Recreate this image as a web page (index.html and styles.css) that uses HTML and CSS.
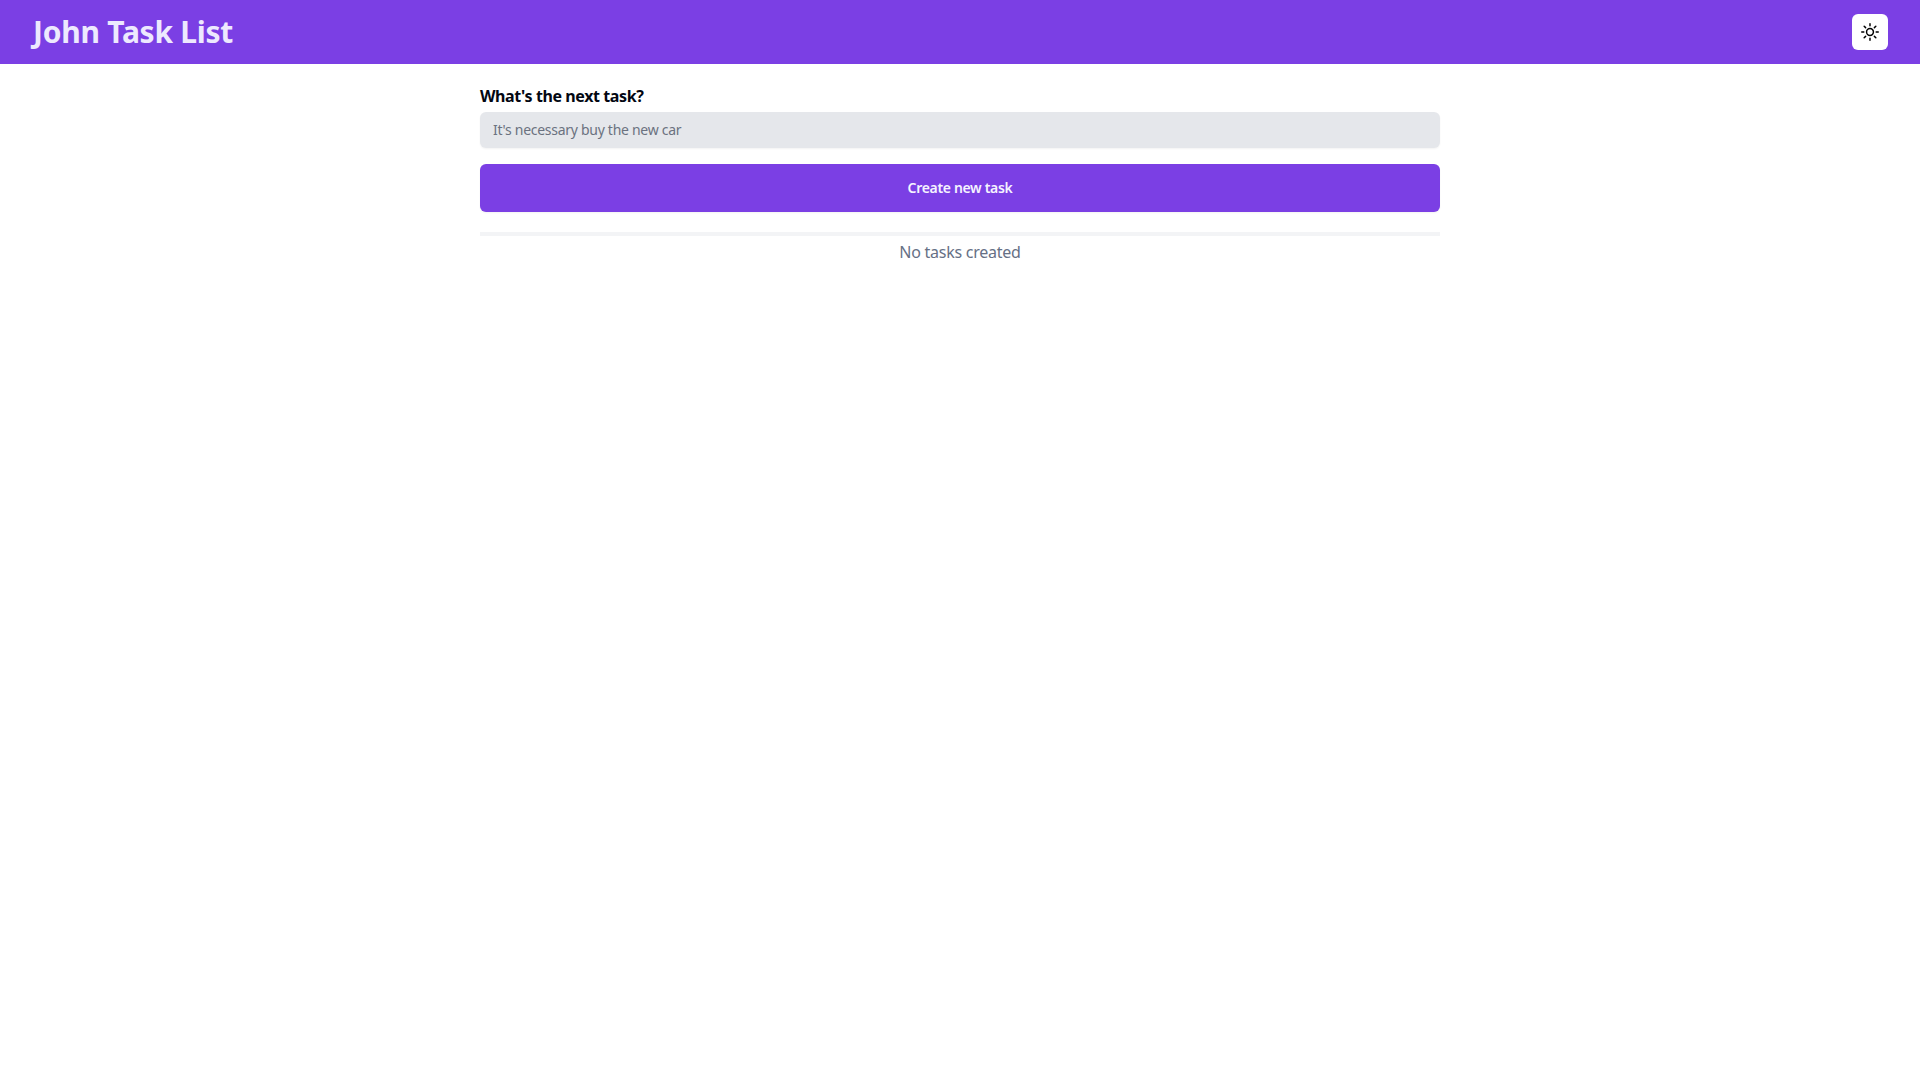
FILE: index.html
```html
<!DOCTYPE html>
<html lang="en">
<head>
<meta charset="utf-8">
<title>John Task List</title>
<link rel="stylesheet" href="styles.css">
</head>
<body>
<header class="header">
  <h1 class="title">John Task List</h1>
  <button class="theme" type="button" aria-label="Toggle theme">
    <svg class="sun" viewBox="0 0 24 24" fill="none" stroke="currentColor" stroke-width="1.6" stroke-linecap="round" stroke-linejoin="round">
      <path d="M12 3v2.25m6.364.386l-1.591 1.591M21 12h-2.25m-.386 6.364l-1.591-1.591M12 18.75V21m-4.773-4.227l-1.591 1.591M5.25 12H3m4.227-4.773L5.636 5.636M15.75 12a3.75 3.75 0 11-7.5 0 3.75 3.75 0 017.5 0z"/>
    </svg>
  </button>
</header>
<main class="main">
  <form class="form">
    <label class="label" for="task">What's the next task?</label>
    <input class="input" id="task" type="text" placeholder="It's necessary buy the new car">
    <button class="create" type="button">Create new task</button>
  </form>
  <hr class="divider">
  <p class="empty">No tasks created</p>
</main>
</body>
</html>
```
FILE: styles.css
```css
* { box-sizing: border-box; }
html, body { margin: 0; padding: 0; }
body { background: #fff; font-family: "Noto Sans", "Open Sans", sans-serif; color: #000; }
.header { height: 64px; background: #7b3fe4; display: flex; align-items: center; justify-content: space-between; padding: 0 32px; }
.title { margin: 0 0 0 1px; font-size: 30px; line-height: 36px; font-weight: 700; letter-spacing: -0.25px; color: #ede9fe; }
.theme { width: 36px; height: 36px; border: 0; border-radius: 6px; background: #fff; padding: 0; display: flex; align-items: center; justify-content: center; color: #000; }
.sun { width: 22px; height: 22px; display: block; }
.main { width: 960px; margin: 0 auto; padding-top: 20px; }
.form { display: flex; flex-direction: column; }
.label { font-size: 16px; line-height: 24px; font-weight: 700; letter-spacing: -0.4px; color: #030712; margin-bottom: 4px; }
.input { height: 36px; border: 0; border-radius: 6px; background: #e5e7eb; padding: 0 13px 2px; font: inherit; font-size: 14px; line-height: 20px; letter-spacing: -0.28px; color: #111827; outline: 0; box-shadow: 0 1px 2px rgba(0,0,0,.05); }
.input::placeholder { color: #6b7280; opacity: 1; }
.create { height: 48px; margin-top: 16px; padding: 0 0 2px; border: 0; border-radius: 6px; background: #7b3fe4; color: #f5f3ff; font: inherit; font-size: 14px; font-weight: 600; letter-spacing: -0.33px; box-shadow: 0 1px 2px rgba(0,0,0,.05); }
.divider { height: 4px; margin: 20px 0 0; border: 0; background: #f3f4f6; }
.empty { margin: 4px 0 0; text-align: center; font-size: 16px; line-height: 24px; letter-spacing: -0.25px; color: #667085; }
```
